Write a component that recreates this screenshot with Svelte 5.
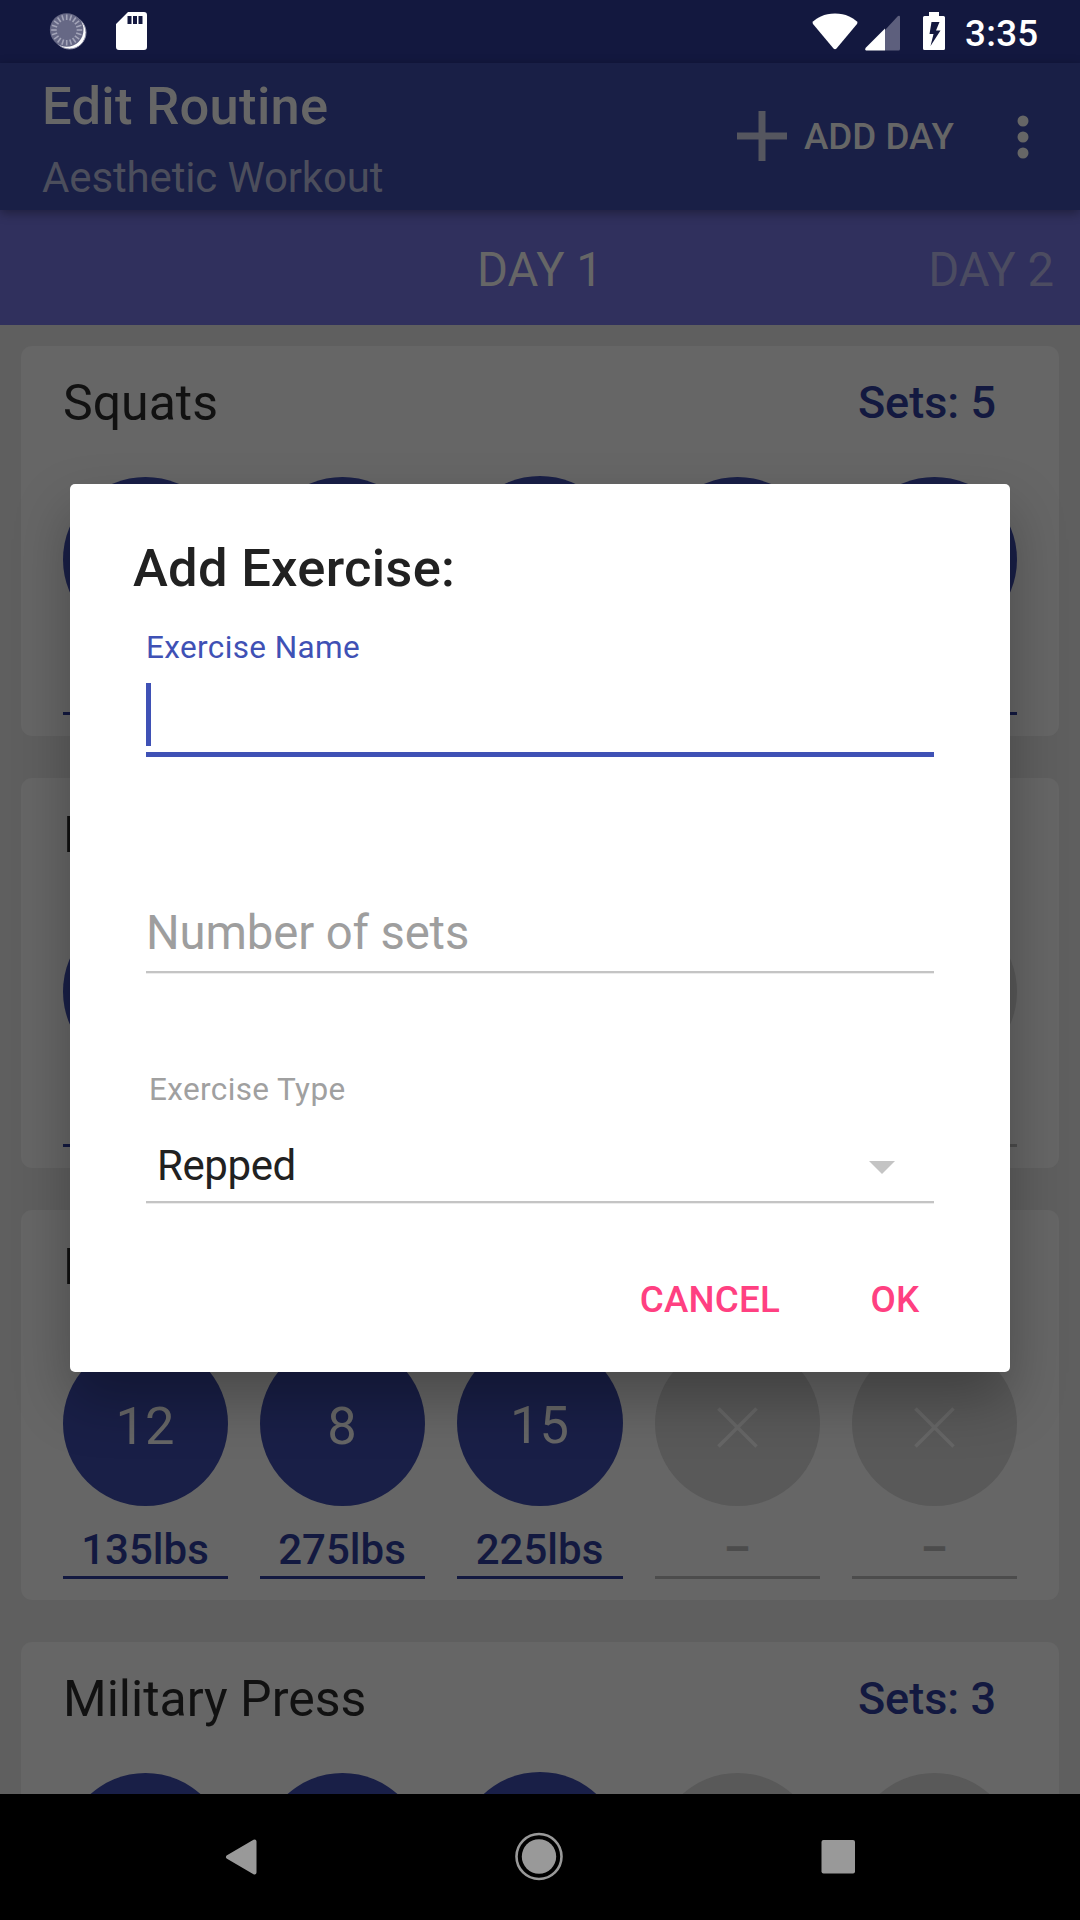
<script>
  const cards = [
    { name: 'Squats', sets: 5, items: [[5, '135lbs'], [5, '135lbs'], [5, '135lbs'], [5, '135lbs'], [5, '135lbs']] },
    { name: 'Bench Press', sets: 3, items: [[12, '135lbs'], [8, '185lbs'], [5, '225lbs'], null, null] },
    { name: 'Deadlift', sets: 3, items: [[12, '135lbs'], [8, '275lbs'], [15, '225lbs'], null, null] },
    { name: 'Military Press', sets: 3, items: [[12, '95lbs'], [8, '115lbs'], [5, '135lbs'], null, null] }
  ];
  const ticks = Array.from({ length: 20 }, (_, i) => i * 18);
</script>

<div class="screen">
  <div class="status">
    <svg class="spin" viewBox="0 0 40 40">
      <circle cx="21.500" cy="22.500" r="16.500" fill="#fff" stroke="#8d8ea6" stroke-width="1" />
      <circle cx="18.700" cy="20" r="16.800" fill="#666885" />
      {#each ticks as a}
        <line x1="18.700" y1="4.500" x2="18.700" y2="10" stroke="#a3a4b8" stroke-width="1.600" transform="rotate({a} 18.7 20)" />
      {/each}
    </svg>
    <svg class="sd" viewBox="0 0 31 38">
      <path fill="#fff" fill-rule="evenodd" d="M12 0H28Q31 0 31 3V35Q31 38 28 38H3Q0 38 0 35V12ZM11.500 4V12H15.500V4ZM17 4V12H21V4ZM22.500 4V12H26.500V4Z" />
    </svg>
    <span class="grow"></span>
    <svg class="wifi" viewBox="0 0 46 37"><path fill="#fff" d="M23 0.500C34 0.500 41 5 45 8.500Q46 9.500 45 11L24.500 35.500Q23 37 21.500 35.500L1 11Q0 9.500 1 8.500C5 5 12 0.500 23 0.500Z" /></svg>
    <svg class="signal" viewBox="0 0 35 36"><path fill="#5d5f7d" d="M20 15L33 1Q35 0 35 2V34Q35 35.500 33.500 35.500H20Z" /><path fill="#fff" d="M20 13.500V35.500H1Q-0.500 35 0.500 33Z" /></svg>
    <svg class="battery" viewBox="0 0 22 38"><path fill="#fff" fill-rule="evenodd" d="M6 0H16V4H20.500Q22 4 22 5.500V36.500Q22 38 20.500 38H1.500Q0 38 0 36.500V5.500Q0 4 1.500 4H6ZM8.500 10L6.500 22H10.500L7.500 34L17.500 18.500H13L16.500 10Z" /></svg>
    <span class="time">3:35</span>
  </div>

  <header class="appbar">
    <div class="titles">
      <div class="title">Edit Routine</div>
      <div class="subtitle">Aesthetic Workout</div>
    </div>
    <svg class="plus" viewBox="0 0 50 50"><path fill="#55565f" d="M21.500 0H28.500V21.500H50V28.500H28.500V50H21.500V28.500H0V21.500H21.500Z" /></svg>
    <span class="add">ADD DAY</span>
    <svg class="more" viewBox="0 0 12 44" fill="#666"><circle cx="6" cy="6" r="5.500" /><circle cx="6" cy="22" r="5.500" /><circle cx="6" cy="38" r="5.500" /></svg>
  </header>

  <nav class="tabs">
    <span class="tab active">DAY 1</span>
    <span class="tab next">DAY 2</span>
  </nav>

  <main class="list">
    {#each cards as card}
      <section class="card">
        <div class="head"><span class="name">{card.name}</span><span class="sets">Sets: {card.sets}</span></div>
        <div class="row">
          {#each card.items as item}
            <div class="set" class:off={!item}>
              <div class="circle">
                {#if item}{item[0]}{:else}
                  <svg class="cross" viewBox="0 0 42 42"><path d="M1.500 1.500L40.500 40.500M40.500 1.500L1.500 40.500" stroke="#666" stroke-width="3.800" /></svg>
                {/if}
              </div>
              <div class="weight">{item ? item[1] : '–'}</div>
            </div>
          {/each}
        </div>
      </section>
    {/each}
  </main>

  <footer class="navbar">
    <svg viewBox="0 0 60 60"><path fill="#999" stroke="#999" stroke-width="4" stroke-linejoin="round" d="M18 31L44.500 15.500V46.500Z" /></svg>
    <svg viewBox="0 0 60 60"><circle cx="30" cy="30.500" r="22.500" fill="none" stroke="#999" stroke-width="2.600" /><circle cx="30" cy="30.500" r="17.200" fill="#999" /></svg>
    <svg viewBox="0 0 60 60"><rect x="12.500" y="14" width="33.500" height="33.500" rx="2" fill="#999" /></svg>
  </footer>

  <div class="dialog">
    <div class="dtitle">Add Exercise:</div>
    <div class="label">Exercise Name</div>
    <div class="input"><i class="caret"></i></div>
    <div class="hint">Number of sets</div>
    <div class="label type">Exercise Type</div>
    <div class="select">
      <span>Repped</span>
      <svg class="arrow" viewBox="0 0 26 13"><path fill="#c4c4c4" d="M0 0H26L13 13Z" /></svg>
    </div>
    <div class="actions"><span>CANCEL</span><span>OK</span></div>
  </div>
</div>

<style>
  :global(body) { margin: 0; background: #000; }
  .screen { position: relative; width: 1080px; height: 1920px; overflow: hidden; display: flex; flex-direction: column; background: #5f5f5f; font-family: Roboto, sans-serif; white-space: nowrap; }
  svg { display: block; flex: none; overflow: visible; }

  .status { height: 63px; flex: none; box-sizing: border-box; padding: 0 41px 0 48px; display: flex; align-items: flex-start; background: #13183f; }
  .spin { width: 40px; height: 40px; margin-top: 10px; }
  .sd { width: 31px; height: 38px; margin: 12px 0 0 28px; }
  .grow { flex: 1; }
  .wifi { width: 46px; height: 37px; margin: 12.500px 7px 0 0; }
  .signal { width: 35px; height: 36px; margin: 14.5px 23px 0 0; }
  .battery { width: 22px; height: 38px; margin: 12px 20px 0 0; }
  .time { width: 74px; margin-top: 12px; font-size: 36.75px; letter-spacing: 0.3px; font-weight: 500; line-height: 44px; color: #fff; }

  .appbar { position: relative; z-index: 1; height: 147px; flex: none; box-sizing: border-box; padding: 0 51px 0 42px; display: flex; align-items: flex-start; background: #191f46; box-shadow: 0 3px 10px rgba(0, 0, 0, 0.35); }
  .titles { flex: 1; padding-top: 13px; }
  .title { font-size: 52.5px; letter-spacing: 0.3px; font-weight: 500; line-height: 60px; color: #666; }
  .subtitle { margin-top: 16.5px; font-size: 42px; letter-spacing: -0.14px; line-height: 50px; color: #4c4e5c; }
  .plus { width: 50px; height: 50px; margin: 48px 17px 0 0; }
  .add { width: 152px; margin: 52px 61px 0 0; font-size: 36.75px; font-weight: 500; line-height: 44px; color: #666; }
  .more { width: 12px; height: 44px; margin-top: 51.500px; }

  .tabs { height: 115px; flex: none; box-sizing: border-box; padding: 33px 26px 0 0; display: grid; grid-template-columns: 1fr auto; background: #30305d; font-size: 47.25px; line-height: 54px; }
  .tab.active { padding-left: 477px; color: #666; }
  .tab.next { color: #4c4c61; }

  .list { flex: 1; min-height: 0; overflow: hidden; padding: 21px 21px 0; display: flex; flex-direction: column; gap: 42px; }
  .card { flex: none; height: 390px; box-sizing: border-box; padding: 28px 42px 0; border-radius: 11px; background: #666; }
  .head { height: 103px; display: flex; justify-content: space-between; align-items: flex-start; }
  .name { font-size: 50px; line-height: 58px; color: #111; }
  .sets { margin: 2px 21px 0 0; font-size: 45px; line-height: 54px; font-weight: 500; color: #131940; }
  .row { display: grid; grid-template-columns: 165px 165px 166px 165px 165px; justify-content: space-between; }
  .circle { height: 165px; box-sizing: border-box; padding: 55px 1px 0 0; border-radius: 50%; background: #191f47; color: #666; font-size: 52.5px; line-height: 60px; text-align: center; }
  .set:nth-child(3) .circle { height: 166px; margin-top: -1px; }
  .cross { width: 41px; height: 41px; margin: 11px auto 0; }
  .weight { margin-top: 19px; height: 51px; padding-right: 1px; border-bottom: 3px solid #131940; font-size: 42px; line-height: 50px; font-weight: 500; text-align: center; color: #131940; }
  .off .circle { background: #595959; }
  .off .weight { border-color: #4c4c4c; color: #4c4c4c; font-weight: 700; }

  .navbar { height: 126px; flex: none; box-sizing: border-box; padding: 32px 211.500px 0 210px; display: flex; justify-content: space-between; background: #000; }
  .navbar svg { width: 60px; height: 60px; }

  .dialog { position: absolute; z-index: 2; left: 70px; top: 484px; width: 940px; height: 888px; box-sizing: border-box; padding: 54px 76px 0; border-radius: 5px; background: #fff; box-shadow: 0 28px 56px rgba(0, 0, 0, 0.28); }
  .dtitle { margin-left: -13px; font-size: 52.5px; letter-spacing: 0.28px; line-height: 60px; font-weight: 500; color: #212121; }
  .label { margin-top: 32px; font-size: 31.5px; letter-spacing: 0.38px; line-height: 36px; color: #3f51b5; }
  .input { height: 87px; box-sizing: border-box; padding-top: 13px; border-bottom: 5px solid #3f51b5; margin-top: 4px; }
  .caret { display: block; width: 5px; height: 63px; background: #3f51b5; }
  .hint { margin-top: 149px; height: 65px; font-size: 47.25px; letter-spacing: -0.12px; line-height: 54px; color: #9e9e9e; border-bottom: 2px solid #c4c4c4; box-shadow: 0 1px #ececec; }
  .label.type { margin: 99px 0 0 3px; color: #a0a0a0; }
  .select { height: 93px; display: flex; align-items: flex-start; justify-content: space-between; padding: 0 39.500px 0 11px; border-bottom: 2px solid #c4c4c4; box-shadow: 0 1px #ececec; color: #212121; font-size: 42px; letter-spacing: -0.4px; line-height: 50px; }
  .select span { margin-top: 32.500px; }
  .arrow { width: 26px; height: 13px; margin-top: 53px; }
  .actions { margin-top: 74.500px; display: flex; justify-content: flex-end; gap: 90.500px; padding-right: 14.500px; color: #ff4081; font-size: 36.75px; letter-spacing: 0.2px; line-height: 44px; font-weight: 500; }
</style>
